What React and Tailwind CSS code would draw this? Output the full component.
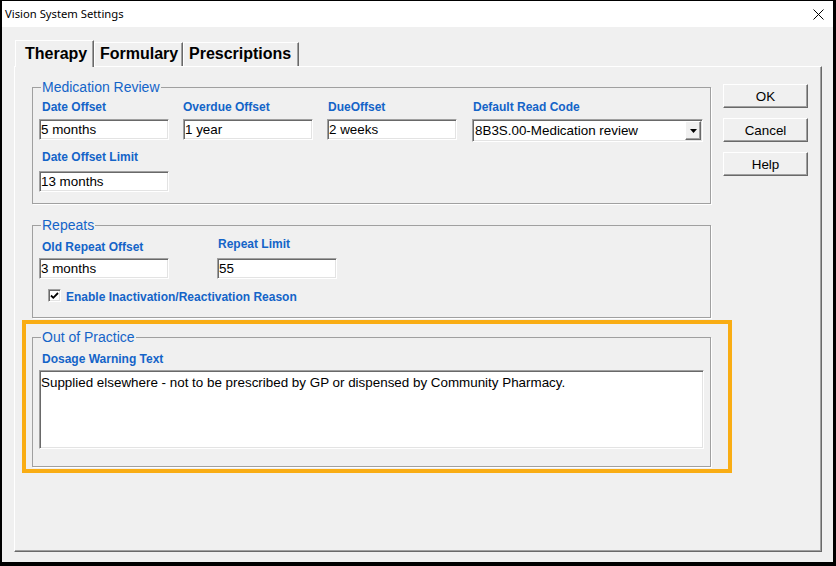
import React from "react";

const FONT = { fontFamily: '"Liberation Sans", Arial, sans-serif' };

const lbl = "text-[12px] leading-[14px] font-bold text-[#1464c8] whitespace-nowrap";
const sunken =
  "bg-white border border-t-[#a0a0a0] border-l-[#a0a0a0] border-r-white border-b-white shadow-[inset_1px_1px_0_#696969,inset_-1px_-1px_0_#e3e3e3]";
const raised =
  "bg-[#f0f0f0] border border-t-white border-l-white border-r-[#696969] border-b-[#696969] shadow-[inset_-1px_-1px_0_#a0a0a0]";
const legendCls =
  "ml-[8px] px-[1px] text-[14px] leading-[16px] text-[#1464c8] whitespace-nowrap";
const fieldsetCls =
  "w-[679px] border border-[#a0a0a0] shadow-[1px_1px_0_#ffffff]";

function Input({ value, w }) {
  return (
    <div
      className={`${sunken} h-[21px] flex items-center pl-[1px] text-[13.4px] leading-[15px] text-black whitespace-nowrap ${w}`}
    >
      {value}
    </div>
  );
}

function Field({ label, value, labelPad = "pl-[1px]" }) {
  return (
    <div className="flex flex-col">
      <div className={`${lbl} ${labelPad} mb-[5px]`}>{label}</div>
      <Input value={value} w="w-[130px]" />
    </div>
  );
}

function Button({ children }) {
  return (
    <div
      className={`${raised} w-[85px] h-[24px] flex items-center justify-center text-[13.4px] leading-[15px] text-black`}
    >
      {children}
    </div>
  );
}

export default function App() {
  return (
    <div
      className="w-[836px] h-[566px] bg-black pt-px pl-[2px] pr-[3px] pb-[4px] flex flex-col"
      style={FONT}
    >
      {/* title bar */}
      <div className="h-[26px] bg-white flex items-center justify-between pl-[3px] pr-[9px] shrink-0">
        <span
          className="text-[11.25px] leading-[16px] text-black"
          style={{ fontFamily: '"Noto Sans", "Liberation Sans", sans-serif' }}
        >
          Vision System Settings
        </span>
        <svg width="11" height="11" viewBox="0 0 11 11">
          <path d="M0.5 0.5 L10.5 10.5 M10.5 0.5 L0.5 10.5" stroke="#000" strokeWidth="1" />
        </svg>
      </div>

      {/* body */}
      <div className="flex-1 bg-[#f0f0f0] pt-[13px] pl-[12px] pb-[10px] flex flex-col">
        {/* tabs */}
        <div className="flex items-end h-[26px] pl-px">
          <div className="relative z-10 -mb-px h-[27px] w-[79px] bg-[#f0f0f0] border-l border-t border-white border-r border-r-[#696969] shadow-[inset_-1px_0_0_#a0a0a0] pl-[9px] pt-[4px] text-[16px] leading-[18px] font-bold text-black">
            Therapy
          </div>
          <div className="h-[24px] w-[89px] bg-[#f0f0f0] border-l border-t border-white border-r border-r-[#696969] shadow-[inset_-1px_0_0_#a0a0a0] pl-[5px] pt-[2px] text-[16px] leading-[18px] font-bold text-black">
            Formulary
          </div>
          <div className="h-[24px] w-[116px] bg-[#f0f0f0] border-l border-t border-white border-r border-r-[#696969] shadow-[inset_-1px_0_0_#a0a0a0] pl-[5px] pt-[2px] text-[16px] leading-[18px] font-bold text-black">
            Prescriptions
          </div>
        </div>

        {/* panel */}
        <div className="w-[808px] h-[486px] border-l border-t border-white border-r border-b border-r-[#696969] border-b-[#696969] shadow-[inset_-1px_-1px_0_#a0a0a0] flex">
          {/* left column */}
          <div className="flex flex-col pt-[12px] pl-[17px]">
            {/* Medication Review */}
            <fieldset className={fieldsetCls}>
              <legend className={legendCls}>Medication Review</legend>
              <div className="px-[6px] pt-[5px] pb-[11px]">
                <div className="grid grid-cols-[130px_130px_130px_231px] gap-x-[14px] items-start">
                  <Field label="Date Offset" value="5 months" labelPad="pl-[3px]" />
                  <Field label="Overdue Offset" value="1 year" labelPad="pl-0" />
                  <Field label="DueOffset" value="2 weeks" />
                  <div className="flex flex-col ml-px">
                    <div className={`${lbl} pl-px mb-[5px]`}>Default Read Code</div>
                    <div className={`${sunken} h-[23px] w-[231px] flex items-stretch p-[1px] pl-[2px]`}>
                      <div className="flex-1 flex items-center text-[13.4px] leading-[15px] text-black whitespace-nowrap">
                        8B3S.00-Medication review
                      </div>
                      <div className={`${raised} w-[16px] flex items-center justify-center`}>
                        <svg width="7" height="4" viewBox="0 0 7 4">
                          <path d="M0 0 H7 L3.5 4 Z" fill="#000" />
                        </svg>
                      </div>
                    </div>
                  </div>
                </div>
                <div className="mt-[8px] flex flex-col">
                  <div className={`${lbl} pl-[3px] mb-[7px]`}>Date Offset Limit</div>
                  <Input value="13 months" w="w-[130px]" />
                </div>
              </div>
            </fieldset>

            {/* Repeats */}
            <fieldset className={`${fieldsetCls} mt-[13px]`}>
              <legend className={legendCls}>Repeats</legend>
              <div className="px-[6px] pt-[4px] pb-[13px]">
                <div className="flex items-end gap-[48px]">
                  <div className="flex flex-col">
                    <div className={`${lbl} pl-[3px] mb-[4px]`}>Old Repeat Offset</div>
                    <Input value="3 months" w="w-[130px]" />
                  </div>
                  <div className="flex flex-col">
                    <div className={`${lbl} pl-px mb-[7px]`}>Repeat Limit</div>
                    <Input value="55" w="w-[120px]" />
                  </div>
                </div>
                <div className="mt-[10px] flex items-start ml-[9px]">
                  <div className={`${sunken} w-[13px] h-[13px] flex items-center justify-center`}>
                    <svg width="9" height="9" viewBox="0 0 9 9">
                      <path d="M1 4.5 L3.3 6.8 L8 2" fill="none" stroke="#000" strokeWidth="1.8" />
                    </svg>
                  </div>
                  <div className={`${lbl} mt-px ml-[5px]`}>Enable Inactivation/Reactivation Reason</div>
                </div>
              </div>
            </fieldset>

            {/* Out of Practice (highlighted) */}
            <div className="mt-[2px] -ml-[10px] -mr-[21px] w-[710px] border-4 border-[#f9ad14] pl-[6px] pt-[5px] pb-[2px]">
              <fieldset className={fieldsetCls}>
                <legend className={legendCls}>Out of Practice</legend>
                <div className="px-[6px] pt-[7px] pb-[17px]">
                  <div className={`${lbl} pl-[3px] mb-[4px]`}>Dosage Warning Text</div>
                  <div className={`${sunken} w-[665px] h-[79px] pl-[1px] pt-[4px] text-[13.4px] leading-[15px] text-black whitespace-nowrap`}>
                    Supplied elsewhere - not to be prescribed by GP or dispensed by Community Pharmacy.
                  </div>
                </div>
              </fieldset>
            </div>
          </div>

          {/* buttons */}
          <div className="ml-[12px] pt-[17px] flex flex-col gap-[10px]">
            <Button>OK</Button>
            <Button>Cancel</Button>
            <Button>Help</Button>
          </div>
        </div>
      </div>
    </div>
  );
}
